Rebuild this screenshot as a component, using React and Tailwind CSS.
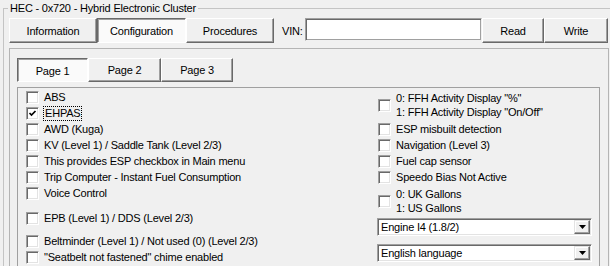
import React from "react";

function Box({ checked }) {
  return (
    <span className="w-[13px] h-[13px] shrink-0 bg-white border border-t-[#a0a0a0] border-l-[#a0a0a0] border-b-white border-r-white shadow-[inset_1px_1px_0_#696969,inset_-1px_-1px_0_#e3e3e3] flex items-center justify-center">
      {checked && (
        <svg width="9" height="9" viewBox="0 0 9 9">
          <path d="M1.5 4 L3.5 6 L7.5 2" fill="none" stroke="#000" strokeWidth="1.7" />
        </svg>
      )}
    </span>
  );
}

function Row({ label, checked, focus, className = "" }) {
  return (
    <div className={"flex items-center h-[16px] " + className}>
      <Box checked={checked} />
      {focus ? (
        <span className="ml-[4px] border border-dotted border-black px-[1px] leading-[13px] whitespace-nowrap">{label}</span>
      ) : (
        <span className="ml-[5px] whitespace-nowrap">{label}</span>
      )}
    </div>
  );
}

function Row2({ a, b, className = "" }) {
  return (
    <div className={"flex items-center h-[28px] " + className}>
      <Box />
      <div className="ml-[5px] flex flex-col leading-[14px] whitespace-nowrap">
        <span>{a}</span>
        <span>{b}</span>
      </div>
    </div>
  );
}

function Btn({ children, className = "" }) {
  return (
    <div
      className={
        "h-full flex items-center justify-center bg-[#f0f0f0] border border-t-white border-l-white border-b-[#696969] border-r-[#696969] shadow-[inset_-1px_-1px_0_#a0a0a0] " +
        className
      }
    >
      {children}
    </div>
  );
}

function SelBtn({ children, className = "" }) {
  return (
    <div
      className={
        "h-full flex items-center justify-center bg-[#fafafa] border border-t-[#696969] border-l-[#696969] border-b-white border-r-white shadow-[inset_1px_1px_0_#a0a0a0] pt-[1px] " +
        className
      }
    >
      {children}
    </div>
  );
}

function Combo({ text, className = "" }) {
  return (
    <div
      className={
        "h-[18px] w-[215px] bg-white flex items-stretch border border-t-[#a0a0a0] border-l-[#a0a0a0] border-b-white border-r-white shadow-[inset_1px_1px_0_#696969,inset_-1px_-1px_0_#e3e3e3] p-[1px] " +
        className
      }
    >
      <span className="flex-1 pl-[2px] flex items-center whitespace-nowrap">{text}</span>
      <span className="w-[16px] bg-[#f0f0f0] border border-t-[#e3e3e3] border-l-[#e3e3e3] border-b-[#696969] border-r-[#696969] shadow-[inset_-1px_-1px_0_#a0a0a0,inset_1px_1px_0_#fff] flex items-center justify-center">
        <svg width="7" height="4" viewBox="0 0 7 4">
          <path d="M0 0 H7 L3.5 4 Z" fill="#000" />
        </svg>
      </span>
    </div>
  );
}

export default function App() {
  return (
    <div className="w-[610px] h-[266px] overflow-hidden bg-[#f0f0f0] text-black text-[11px] tracking-[-0.2px] font-['Liberation_Sans',Arial,sans-serif] leading-[14px]">
      <div className="relative mt-[8px] ml-[3px] w-[640px] h-[300px] border-t border-l border-[#c4c4c4] pt-[9px] pl-[5px]">
        <span className="absolute left-[4px] top-[-8px] px-[2px] bg-[#f0f0f0] leading-[14px] whitespace-nowrap">
          HEC - 0x720 - Hybrid Electronic Cluster
        </span>
        <div className="flex h-[25px] items-stretch">
          <Btn className="w-[88px]">Information</Btn>
          <SelBtn className="w-[89px]">Configuration</SelBtn>
          <Btn className="w-[88px]">Procedures</Btn>
          <span className="ml-[8px] w-[23px] flex items-center">VIN:</span>
          <div className="w-[177px] h-[23px] bg-white border border-t-[#a0a0a0] border-l-[#a0a0a0] border-b-[#f0f0f0] border-r-[#f0f0f0] shadow-[inset_1px_1px_0_#696969,inset_-1px_-1px_0_#a0a0a0]" />
          <Btn className="w-[62px]">Read</Btn>
          <Btn className="w-[64px]">Write</Btn>
        </div>
        <div className="mt-[5px] w-[600px] h-[300px] border border-[#b4b4b4] pt-[9px] pl-[7px]">
          <div className="flex h-[24px]">
            <SelBtn className="w-[71px]">Page 1</SelBtn>
            <Btn className="w-[73px]">Page 2</Btn>
            <Btn className="w-[72px]">Page 3</Btn>
          </div>
          <div className="mt-[5px] w-[583px] h-[300px] border border-[#a0a0a0] pl-[8px] flex">
            <div className="w-[351px] flex flex-col pt-[1px]">
              <Row label="ABS" />
              <Row label="EHPAS" checked focus />
              <Row label="AWD (Kuga)" />
              <Row label="KV (Level 1) / Saddle Tank (Level 2/3)" />
              <Row label="This provides ESP checkbox in Main menu" />
              <Row label="Trip Computer - Instant Fuel Consumption" />
              <Row label="Voice Control" />
              <Row label="EPB (Level 1) / DDS (Level 2/3)" className="mt-[9px]" />
              <Row label="Beltminder (Level 1) / Not used (0) (Level 2/3)" className="mt-[7px]" />
              <Row label={'"Seatbelt not fastened" chime enabled'} />
            </div>
            <div className="w-[215px] flex flex-col pt-[3px]">
              <div className="pl-[1px] flex flex-col">
                <Row2 a={'0: FFH Activity Display "%"'} b={'1: FFH Activity Display "On/Off"'} />
                <Row label="ESP misbuilt detection" className="mt-[2px]" />
                <Row label="Navigation (Level 3)" />
                <Row label="Fuel cap sensor" />
                <Row label="Speedo Bias Not Active" />
                <Row2 a="0: UK Gallons" b="1: US Gallons" className="mt-[2px]" />
              </div>
              <Combo text="Engine I4 (1.8/2)" className="mt-[3px]" />
              <Combo text="English language" className="mt-[8px]" />
            </div>
          </div>
        </div>
      </div>
    </div>
  );
}
